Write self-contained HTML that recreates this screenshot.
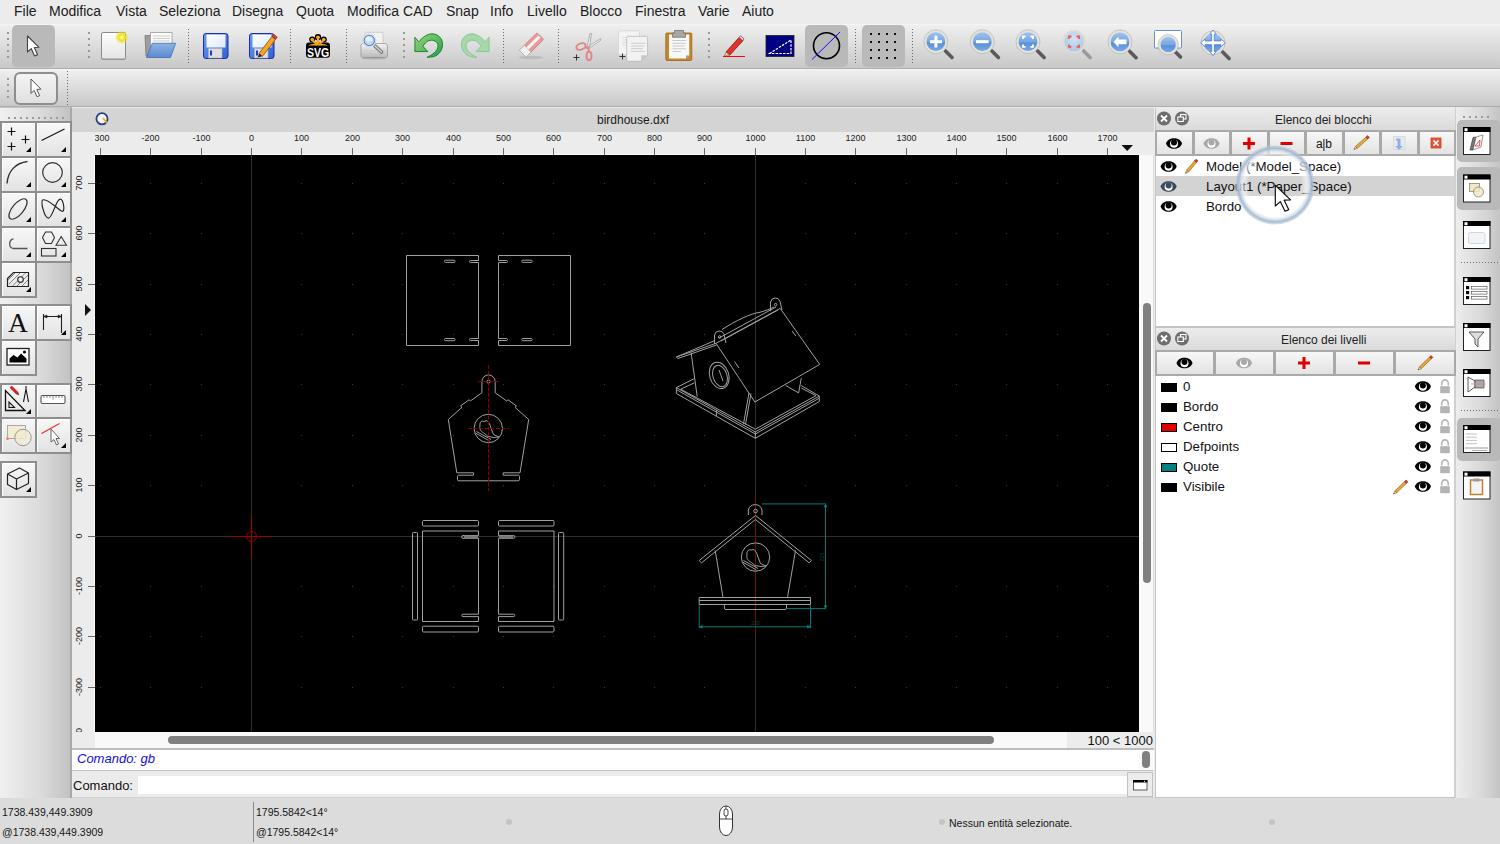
<!DOCTYPE html>
<html><head><meta charset="utf-8"><style>*{margin:0;padding:0;box-sizing:border-box}
html,body{width:1500px;height:844px;overflow:hidden;background:#ececec;font-family:"Liberation Sans",sans-serif;color:#1e1e1e}
.a{position:absolute}
svg{display:block}
#menubar{left:0;top:0;width:1500px;height:25px;background:#ececec;border-bottom:1px solid #f4f4f4}
#menubar span{position:absolute;top:3px;font-size:14px;line-height:16px;color:#202020}
.tb{left:0;width:1500px;background:linear-gradient(#efefef,#dedede 45%,#c8c8c8);border-bottom:1px solid #adadad}
#tb1{top:25px;height:44px}
#tb2{top:69px;height:38px;border-top:1px solid #f6f6f6}
.handle{position:absolute;width:2px;background:repeating-linear-gradient(#9a9a9a 0 2px,transparent 2px 6px)}
.hhandle{position:absolute;height:2px;background:repeating-linear-gradient(90deg,#9a9a9a 0 2px,transparent 2px 6px)}
.vsep{position:absolute;width:1px;background:repeating-linear-gradient(#6a6a6a 0 1px,transparent 1px 3px)}
.hsep{position:absolute;height:1px;background:repeating-linear-gradient(90deg,#6a6a6a 0 1px,transparent 1px 3px)}
#lefttb{left:0;top:107px;width:72px;height:691px;background:linear-gradient(90deg,#f0f0f0,#dadada 60%,#c2c2c2);border-right:2px solid #a9a9a9;border-top:1px solid #c4c4c4}
.tbtn{position:absolute;width:35px;height:35px;border:2px solid #9a9a9a;background:linear-gradient(#f7f7f7,#e4e4e4)}
.selbtn{position:absolute;background:#b9b9b9;border-radius:5px}
#mdititle{left:72px;top:108px;width:1082px;height:24px;background:#d4d4d4}
#mdititle span{position:absolute;left:525px;top:5px;font-size:12px;line-height:14px;color:#1a1a1a}
#rulerT{left:72px;top:132px;width:1082px;height:23px;background:#ececec}
#rulerL{left:72px;top:155px;width:23px;height:593px;background:#ececec}
#canvas{left:95px;top:155px;width:1044px;height:577px;background:#000;overflow:hidden}
#vscroll{left:1139px;top:155px;width:15px;height:593px;background:#f9f9f9;border-right:1px solid #dcdcdc}
#hscroll{left:95px;top:732px;width:972px;height:16px;background:#f9f9f9}
#hlabel{left:1067px;top:732px;width:87px;height:16px;background:#ececec}
#hlabel span{position:absolute;right:1px;top:1px;font-size:13px;line-height:16px;color:#111}
.thumb{position:absolute;background:#808080;border-radius:4px}
#cmdhist{left:72px;top:748px;width:1082px;height:23px;background:#fff;border-top:2px solid #bdbdbd;border-bottom:1px solid #c4c4c4}
#cmdhist span{position:absolute;left:5px;top:1px;font-size:13px;line-height:15px;font-style:italic;color:#1010e0}
#cmdline{left:72px;top:771px;width:1082px;height:27px;background:#ebebeb;border-bottom:1px solid #d0d0d0}
#cmdline span{position:absolute;left:1px;top:7px;font-size:13px;line-height:15px;color:#111}
#cmdinput{left:138px;top:776px;width:989px;height:18px;background:#fff}
#cmdbtn{left:1127px;top:772px;width:26px;height:25px;background:#ececec;border:1px solid #c2c2c2}
#status{left:0;top:798px;width:1500px;height:46px;background:#dcdcdc;font-size:10.5px;color:#161616}
#status span{position:absolute;line-height:12px}
.dock{left:1155px;width:300px;background:#fff;border-left:1px solid #c4c4c4;border-right:1px solid #cfcfcf}
#dock1{top:108px;height:220px}
#dock2{top:328px;height:470px;border-bottom:1px solid #c4c4c4}
.dtitle{position:absolute;left:0;top:0;width:299px;height:22px;background:linear-gradient(#ececec,#dadada);font-size:12px;color:#222}
.dtitle span{position:absolute;top:5px;line-height:14px}
.dbtn{position:absolute;height:26px;background:linear-gradient(#f4f4f4,#e6e6e6);border:2px solid #adadad;border-right-width:2px}
.rows span{position:absolute;font-size:13.3px;line-height:16px;color:#111}
#righttb{left:1455px;top:107px;width:45px;height:691px;background:linear-gradient(90deg,#ededed,#d8d8d8 60%,#c4c4c4);border-left:1px solid #d0d0d0}
</style></head><body>
<div id="menubar" class="a">
<span style="left:14px">File</span><span style="left:49px">Modifica</span><span style="left:116px">Vista</span><span style="left:159px">Seleziona</span><span style="left:232px">Disegna</span><span style="left:296px">Quota</span><span style="left:347px">Modifica CAD</span><span style="left:446px">Snap</span><span style="left:490px">Info</span><span style="left:527px">Livello</span><span style="left:580px">Blocco</span><span style="left:635px">Finestra</span><span style="left:698px">Varie</span><span style="left:742px">Aiuto</span>
</div>
<div id="tb1" class="a tb">
 <div class="handle" style="left:7px;top:7px;height:27px"></div>
 <div class="selbtn" style="left:12px;top:0px;width:43px;height:42px"></div>
 <div class="handle" style="left:88px;top:7px;height:27px"></div>
 <div class="vsep" style="left:188px;top:4px;height:35px"></div>
 <div class="vsep" style="left:290px;top:4px;height:35px"></div>
 <div class="vsep" style="left:346px;top:4px;height:35px"></div>
 <div class="handle" style="left:403px;top:7px;height:27px"></div>
 <div class="vsep" style="left:503px;top:4px;height:35px"></div>
 <div class="vsep" style="left:558px;top:4px;height:35px"></div>
 <div class="handle" style="left:708px;top:7px;height:27px"></div>
 <div class="selbtn" style="left:805px;top:0px;width:43px;height:42px"></div>
 <div class="vsep" style="left:855px;top:4px;height:35px"></div>
 <div class="selbtn" style="left:862px;top:0px;width:43px;height:42px"></div>
 <div class="vsep" style="left:912px;top:4px;height:35px"></div>
</div>
<div id="tb2" class="a tb">
 <div class="handle" style="left:7px;top:8px;height:21px"></div>
 <div class="a" style="left:14px;top:2px;width:44px;height:33px;border:2px solid #8e8e8e;border-radius:6px;background:linear-gradient(#f4f4f4,#e0e0e0)"></div>
 <div class="vsep" style="left:67px;top:1px;height:34px"></div>
</div>
<div id="lefttb" class="a">
 <div class="hhandle" style="left:8px;top:9px;width:56px"></div>
</div>
<div id="mdititle" class="a"><span>birdhouse.dxf</span></div>
<div id="rulerT" class="a"></div>
<div id="rulerL" class="a"></div>
<div class="a" style="left:94px;top:154px;width:1045px;height:1px;background:#fafafa"></div>
<div class="a" style="left:94px;top:154px;width:1px;height:578px;background:#fafafa"></div>
<div id="vscroll" class="a"><div class="thumb" style="left:4px;top:148px;width:8px;height:280px"></div></div>
<div id="hscroll" class="a"><div class="thumb" style="left:73px;top:4px;width:826px;height:8px"></div></div>
<div id="hlabel" class="a"><span>100 &lt; 1000</span></div>
<div id="cmdhist" class="a"><span>Comando: gb</span><div class="a" style="left:1067px;top:0;width:14px;height:20px;background:#f9f9f9"></div><div class="thumb" style="left:1070px;top:1px;width:8px;height:17px"></div></div>
<div id="cmdline" class="a"><span>Comando:</span></div>
<div id="cmdinput" class="a"></div>
<div id="cmdbtn" class="a"></div>
<div id="dock1" class="a dock">
 <div class="dtitle"><span style="left:119px">Elenco dei blocchi</span></div>
 <div class="a" style="left:0;top:22px;width:299px;height:26px;background:#bdbdbd"></div>
 <div class="a" style="left:0;top:68px;width:299px;height:20px;background:#d3d3d3"></div>
 <div class="rows">
  <span style="left:50px;top:51px">Model (*Model_Space)</span>
  <span style="left:50px;top:71px">Layout1 (*Paper_Space)</span>
  <span style="left:50px;top:91px">Bordo</span>
 </div>
 <div class="a" style="left:0;top:218px;width:299px;height:2px;background:#c4c4c4"></div>
</div>
<div id="dock2" class="a dock">
 <div class="dtitle"><span style="left:125px">Elenco dei livelli</span></div>
 <div class="rows">
  <span style="left:27px;top:51px">0</span>
  <span style="left:27px;top:71px">Bordo</span>
  <span style="left:27px;top:91px">Centro</span>
  <span style="left:27px;top:111px">Defpoints</span>
  <span style="left:27px;top:131px">Quote</span>
  <span style="left:27px;top:151px">Visibile</span>
 </div>
 <div class="a" style="left:5px;top:55px;width:16px;height:9px;background:#000"></div>
 <div class="a" style="left:5px;top:75px;width:16px;height:9px;background:#000"></div>
 <div class="a" style="left:5px;top:95px;width:16px;height:9px;background:#e00000;border:1px solid #000"></div>
 <div class="a" style="left:5px;top:115px;width:16px;height:9px;background:#fff;border:1px solid #000"></div>
 <div class="a" style="left:5px;top:135px;width:16px;height:9px;background:#008080;border:1px solid #000"></div>
 <div class="a" style="left:5px;top:155px;width:16px;height:9px;background:#000"></div>
</div>
<div id="righttb" class="a">
 <div class="hhandle" style="left:7px;top:9px;width:28px"></div>
 <div class="selbtn" style="left:1px;top:13px;width:44px;height:42px"></div>
 <div class="selbtn" style="left:1px;top:60px;width:44px;height:43px"></div>
 <div class="hsep" style="left:5px;top:155px;width:40px"></div>
 <div class="hsep" style="left:5px;top:303px;width:40px"></div>
 <div class="selbtn" style="left:1px;top:311px;width:44px;height:43px"></div>
</div>
<div id="status" class="a">
 <span style="left:2px;top:8px">1738.439,449.3909</span>
 <span style="left:2px;top:28px">@1738.439,449.3909</span>
 <div class="a" style="left:253px;top:4px;width:1px;height:40px;background:#8a8a8a"></div>
 <span style="left:256px;top:8px">1795.5842&lt;14°</span>
 <span style="left:256px;top:28px">@1795.5842&lt;14°</span>
 <div class="a" style="left:506px;top:21px;width:6px;height:6px;border-radius:3px;background:#c4c4c4"></div>
 <div class="a" style="left:939px;top:21px;width:6px;height:6px;border-radius:3px;background:#c4c4c4"></div>
 <div class="a" style="left:1269px;top:21px;width:6px;height:6px;border-radius:3px;background:#c4c4c4"></div>
 <span style="left:949px;top:19px">Nessun entità selezionate.</span>
</div>

<div id="canvas" class="a"><svg class="a" style="left:0;top:0" width="1044" height="576" viewBox="95 155 1044 576"><g fill="#3c3c3c"><rect x="100" y="737" width="1" height="1"/><rect x="100" y="687" width="1" height="1"/><rect x="100" y="636" width="1" height="1"/><rect x="100" y="586" width="1" height="1"/><rect x="100" y="536" width="1" height="1"/><rect x="100" y="485" width="1" height="1"/><rect x="100" y="435" width="1" height="1"/><rect x="100" y="384" width="1" height="1"/><rect x="100" y="334" width="1" height="1"/><rect x="100" y="284" width="1" height="1"/><rect x="100" y="233" width="1" height="1"/><rect x="100" y="183" width="1" height="1"/><rect x="150" y="737" width="1" height="1"/><rect x="150" y="687" width="1" height="1"/><rect x="150" y="636" width="1" height="1"/><rect x="150" y="586" width="1" height="1"/><rect x="150" y="536" width="1" height="1"/><rect x="150" y="485" width="1" height="1"/><rect x="150" y="435" width="1" height="1"/><rect x="150" y="384" width="1" height="1"/><rect x="150" y="334" width="1" height="1"/><rect x="150" y="284" width="1" height="1"/><rect x="150" y="233" width="1" height="1"/><rect x="150" y="183" width="1" height="1"/><rect x="201" y="737" width="1" height="1"/><rect x="201" y="687" width="1" height="1"/><rect x="201" y="636" width="1" height="1"/><rect x="201" y="586" width="1" height="1"/><rect x="201" y="536" width="1" height="1"/><rect x="201" y="485" width="1" height="1"/><rect x="201" y="435" width="1" height="1"/><rect x="201" y="384" width="1" height="1"/><rect x="201" y="334" width="1" height="1"/><rect x="201" y="284" width="1" height="1"/><rect x="201" y="233" width="1" height="1"/><rect x="201" y="183" width="1" height="1"/><rect x="251" y="737" width="1" height="1"/><rect x="251" y="687" width="1" height="1"/><rect x="251" y="636" width="1" height="1"/><rect x="251" y="586" width="1" height="1"/><rect x="251" y="536" width="1" height="1"/><rect x="251" y="485" width="1" height="1"/><rect x="251" y="435" width="1" height="1"/><rect x="251" y="384" width="1" height="1"/><rect x="251" y="334" width="1" height="1"/><rect x="251" y="284" width="1" height="1"/><rect x="251" y="233" width="1" height="1"/><rect x="251" y="183" width="1" height="1"/><rect x="301" y="737" width="1" height="1"/><rect x="301" y="687" width="1" height="1"/><rect x="301" y="636" width="1" height="1"/><rect x="301" y="586" width="1" height="1"/><rect x="301" y="536" width="1" height="1"/><rect x="301" y="485" width="1" height="1"/><rect x="301" y="435" width="1" height="1"/><rect x="301" y="384" width="1" height="1"/><rect x="301" y="334" width="1" height="1"/><rect x="301" y="284" width="1" height="1"/><rect x="301" y="233" width="1" height="1"/><rect x="301" y="183" width="1" height="1"/><rect x="352" y="737" width="1" height="1"/><rect x="352" y="687" width="1" height="1"/><rect x="352" y="636" width="1" height="1"/><rect x="352" y="586" width="1" height="1"/><rect x="352" y="536" width="1" height="1"/><rect x="352" y="485" width="1" height="1"/><rect x="352" y="435" width="1" height="1"/><rect x="352" y="384" width="1" height="1"/><rect x="352" y="334" width="1" height="1"/><rect x="352" y="284" width="1" height="1"/><rect x="352" y="233" width="1" height="1"/><rect x="352" y="183" width="1" height="1"/><rect x="402" y="737" width="1" height="1"/><rect x="402" y="687" width="1" height="1"/><rect x="402" y="636" width="1" height="1"/><rect x="402" y="586" width="1" height="1"/><rect x="402" y="536" width="1" height="1"/><rect x="402" y="485" width="1" height="1"/><rect x="402" y="435" width="1" height="1"/><rect x="402" y="384" width="1" height="1"/><rect x="402" y="334" width="1" height="1"/><rect x="402" y="284" width="1" height="1"/><rect x="402" y="233" width="1" height="1"/><rect x="402" y="183" width="1" height="1"/><rect x="453" y="737" width="1" height="1"/><rect x="453" y="687" width="1" height="1"/><rect x="453" y="636" width="1" height="1"/><rect x="453" y="586" width="1" height="1"/><rect x="453" y="536" width="1" height="1"/><rect x="453" y="485" width="1" height="1"/><rect x="453" y="435" width="1" height="1"/><rect x="453" y="384" width="1" height="1"/><rect x="453" y="334" width="1" height="1"/><rect x="453" y="284" width="1" height="1"/><rect x="453" y="233" width="1" height="1"/><rect x="453" y="183" width="1" height="1"/><rect x="503" y="737" width="1" height="1"/><rect x="503" y="687" width="1" height="1"/><rect x="503" y="636" width="1" height="1"/><rect x="503" y="586" width="1" height="1"/><rect x="503" y="536" width="1" height="1"/><rect x="503" y="485" width="1" height="1"/><rect x="503" y="435" width="1" height="1"/><rect x="503" y="384" width="1" height="1"/><rect x="503" y="334" width="1" height="1"/><rect x="503" y="284" width="1" height="1"/><rect x="503" y="233" width="1" height="1"/><rect x="503" y="183" width="1" height="1"/><rect x="553" y="737" width="1" height="1"/><rect x="553" y="687" width="1" height="1"/><rect x="553" y="636" width="1" height="1"/><rect x="553" y="586" width="1" height="1"/><rect x="553" y="536" width="1" height="1"/><rect x="553" y="485" width="1" height="1"/><rect x="553" y="435" width="1" height="1"/><rect x="553" y="384" width="1" height="1"/><rect x="553" y="334" width="1" height="1"/><rect x="553" y="284" width="1" height="1"/><rect x="553" y="233" width="1" height="1"/><rect x="553" y="183" width="1" height="1"/><rect x="604" y="737" width="1" height="1"/><rect x="604" y="687" width="1" height="1"/><rect x="604" y="636" width="1" height="1"/><rect x="604" y="586" width="1" height="1"/><rect x="604" y="536" width="1" height="1"/><rect x="604" y="485" width="1" height="1"/><rect x="604" y="435" width="1" height="1"/><rect x="604" y="384" width="1" height="1"/><rect x="604" y="334" width="1" height="1"/><rect x="604" y="284" width="1" height="1"/><rect x="604" y="233" width="1" height="1"/><rect x="604" y="183" width="1" height="1"/><rect x="654" y="737" width="1" height="1"/><rect x="654" y="687" width="1" height="1"/><rect x="654" y="636" width="1" height="1"/><rect x="654" y="586" width="1" height="1"/><rect x="654" y="536" width="1" height="1"/><rect x="654" y="485" width="1" height="1"/><rect x="654" y="435" width="1" height="1"/><rect x="654" y="384" width="1" height="1"/><rect x="654" y="334" width="1" height="1"/><rect x="654" y="284" width="1" height="1"/><rect x="654" y="233" width="1" height="1"/><rect x="654" y="183" width="1" height="1"/><rect x="704" y="737" width="1" height="1"/><rect x="704" y="687" width="1" height="1"/><rect x="704" y="636" width="1" height="1"/><rect x="704" y="586" width="1" height="1"/><rect x="704" y="536" width="1" height="1"/><rect x="704" y="485" width="1" height="1"/><rect x="704" y="435" width="1" height="1"/><rect x="704" y="384" width="1" height="1"/><rect x="704" y="334" width="1" height="1"/><rect x="704" y="284" width="1" height="1"/><rect x="704" y="233" width="1" height="1"/><rect x="704" y="183" width="1" height="1"/><rect x="755" y="737" width="1" height="1"/><rect x="755" y="687" width="1" height="1"/><rect x="755" y="636" width="1" height="1"/><rect x="755" y="586" width="1" height="1"/><rect x="755" y="536" width="1" height="1"/><rect x="755" y="485" width="1" height="1"/><rect x="755" y="435" width="1" height="1"/><rect x="755" y="384" width="1" height="1"/><rect x="755" y="334" width="1" height="1"/><rect x="755" y="284" width="1" height="1"/><rect x="755" y="233" width="1" height="1"/><rect x="755" y="183" width="1" height="1"/><rect x="805" y="737" width="1" height="1"/><rect x="805" y="687" width="1" height="1"/><rect x="805" y="636" width="1" height="1"/><rect x="805" y="586" width="1" height="1"/><rect x="805" y="536" width="1" height="1"/><rect x="805" y="485" width="1" height="1"/><rect x="805" y="435" width="1" height="1"/><rect x="805" y="384" width="1" height="1"/><rect x="805" y="334" width="1" height="1"/><rect x="805" y="284" width="1" height="1"/><rect x="805" y="233" width="1" height="1"/><rect x="805" y="183" width="1" height="1"/><rect x="855" y="737" width="1" height="1"/><rect x="855" y="687" width="1" height="1"/><rect x="855" y="636" width="1" height="1"/><rect x="855" y="586" width="1" height="1"/><rect x="855" y="536" width="1" height="1"/><rect x="855" y="485" width="1" height="1"/><rect x="855" y="435" width="1" height="1"/><rect x="855" y="384" width="1" height="1"/><rect x="855" y="334" width="1" height="1"/><rect x="855" y="284" width="1" height="1"/><rect x="855" y="233" width="1" height="1"/><rect x="855" y="183" width="1" height="1"/><rect x="906" y="737" width="1" height="1"/><rect x="906" y="687" width="1" height="1"/><rect x="906" y="636" width="1" height="1"/><rect x="906" y="586" width="1" height="1"/><rect x="906" y="536" width="1" height="1"/><rect x="906" y="485" width="1" height="1"/><rect x="906" y="435" width="1" height="1"/><rect x="906" y="384" width="1" height="1"/><rect x="906" y="334" width="1" height="1"/><rect x="906" y="284" width="1" height="1"/><rect x="906" y="233" width="1" height="1"/><rect x="906" y="183" width="1" height="1"/><rect x="956" y="737" width="1" height="1"/><rect x="956" y="687" width="1" height="1"/><rect x="956" y="636" width="1" height="1"/><rect x="956" y="586" width="1" height="1"/><rect x="956" y="536" width="1" height="1"/><rect x="956" y="485" width="1" height="1"/><rect x="956" y="435" width="1" height="1"/><rect x="956" y="384" width="1" height="1"/><rect x="956" y="334" width="1" height="1"/><rect x="956" y="284" width="1" height="1"/><rect x="956" y="233" width="1" height="1"/><rect x="956" y="183" width="1" height="1"/><rect x="1006" y="737" width="1" height="1"/><rect x="1006" y="687" width="1" height="1"/><rect x="1006" y="636" width="1" height="1"/><rect x="1006" y="586" width="1" height="1"/><rect x="1006" y="536" width="1" height="1"/><rect x="1006" y="485" width="1" height="1"/><rect x="1006" y="435" width="1" height="1"/><rect x="1006" y="384" width="1" height="1"/><rect x="1006" y="334" width="1" height="1"/><rect x="1006" y="284" width="1" height="1"/><rect x="1006" y="233" width="1" height="1"/><rect x="1006" y="183" width="1" height="1"/><rect x="1057" y="737" width="1" height="1"/><rect x="1057" y="687" width="1" height="1"/><rect x="1057" y="636" width="1" height="1"/><rect x="1057" y="586" width="1" height="1"/><rect x="1057" y="536" width="1" height="1"/><rect x="1057" y="485" width="1" height="1"/><rect x="1057" y="435" width="1" height="1"/><rect x="1057" y="384" width="1" height="1"/><rect x="1057" y="334" width="1" height="1"/><rect x="1057" y="284" width="1" height="1"/><rect x="1057" y="233" width="1" height="1"/><rect x="1057" y="183" width="1" height="1"/><rect x="1107" y="737" width="1" height="1"/><rect x="1107" y="687" width="1" height="1"/><rect x="1107" y="636" width="1" height="1"/><rect x="1107" y="586" width="1" height="1"/><rect x="1107" y="536" width="1" height="1"/><rect x="1107" y="485" width="1" height="1"/><rect x="1107" y="435" width="1" height="1"/><rect x="1107" y="384" width="1" height="1"/><rect x="1107" y="334" width="1" height="1"/><rect x="1107" y="284" width="1" height="1"/><rect x="1107" y="233" width="1" height="1"/><rect x="1107" y="183" width="1" height="1"/></g><g stroke="#2e2e2e" stroke-width="1" fill="none">
 <path d="M95 536.5H1139M251.5 155V731M755.5 155V731"/>
</g>
<g stroke="#a00000" stroke-width="1" fill="none">
 <path d="M231 536.5H272M251.5 516V557"/>
 <circle cx="251.5" cy="536.5" r="5"/>
</g>
<g stroke="#a0a0a0" stroke-width="1" fill="none" stroke-linejoin="round">
 <!-- side panels top -->
 <path d="M406.5 255.5H478.5V260.5H470.5A1 1 0 0 0 470.5 262.5H478.5V338.5H470.5A1 1 0 0 0 470.5 340.5H478.5V345.5H406.5Z"/>
 <rect x="444.5" y="260.2" width="10.5" height="2.2" rx="1"/>
 <rect x="444.5" y="338.5" width="10.5" height="2.2" rx="1"/>
 <path d="M570.5 255.5H498.5V260.5H506.5A1 1 0 0 1 506.5 262.5H498.5V338.5H506.5A1 1 0 0 1 506.5 340.5H498.5V345.5H570.5Z"/>
 <rect x="521.7" y="260.2" width="10.5" height="2.2" rx="1"/>
 <rect x="521.7" y="338.5" width="10.5" height="2.2" rx="1"/>
 <!-- front panel with bird -->
 <path d="M481.9 392.8V381.6A6.65 6.65 0 0 1 495.2 381.6V392.8L506.5 400.9L508 399.8L516.5 406L515 407.3L528.7 419.5L520 472.8H503.2V475.2H518.5A1.5 1.5 0 0 1 519.5 476.7V479.3A1.5 1.5 0 0 1 518 480.8H459A1.5 1.5 0 0 1 457.5 479.3V476.7A1.5 1.5 0 0 1 458.5 475.2H473.6V472.8H456.8L448.3 419.5L462 407.3L460.5 406L469 399.8L470.5 400.9Z"/>
 <circle cx="488.5" cy="381.6" r="1.6"/>
 <circle cx="488.3" cy="428.5" r="14.2"/>
 <path d="M484 421.5C481 420 479.5 423 480 426C479 429.5 481.5 432 484.5 433.5L488 436.5L494 437.5L499 437L493.5 434.5L491 428C490 424 488.5 422 487 420.5Z M476.5 431.5L491 439.5M475.5 433L489.5 441"/>
 <!-- bottom panels -->
 <rect x="422.5" y="520.5" width="56" height="5.5" rx="1"/>
 <rect x="498.5" y="520.5" width="55.5" height="5.5" rx="1"/>
 <rect x="422.5" y="626.2" width="56" height="5.8" rx="1"/>
 <rect x="498.5" y="626.2" width="55.5" height="5.8" rx="1"/>
 <rect x="412.5" y="532.5" width="5" height="87.5" rx="0.8"/>
 <rect x="558.5" y="532.5" width="5.2" height="87.5" rx="0.8"/>
 <path d="M422.5 531H478.5V535.5H463A1 1 0 0 0 463 538.3H478.5V614.2H463A1 1 0 0 0 463 616.6H478.5V621.5H422.5Z"/>
 <path d="M554 531H498.5V535.5H513.6A1 1 0 0 1 513.6 538.3H498.5V614.2H513.6A1 1 0 0 1 513.6 616.6H498.5V621.5H554Z"/>
</g>
<g fill="#777"><rect x="464" y="535.5" width="14" height="3"/><rect x="499" y="535.5" width="14" height="3"/></g>
<!-- red center lines -->
<g stroke="#900000" stroke-width="1" fill="none" stroke-dasharray="4 1.6">
 <path d="M488.5 365V491M468 428.5H509M477.9 381.6H498.9"/>
 <path d="M755.5 495V636"/>
</g>
<!-- front view with dims -->
<g stroke="#a0a0a0" stroke-width="1" fill="none" stroke-linejoin="round">
 <path d="M748.4 515V510A7 7 0 0 1 762 510V515"/>
 <circle cx="755.5" cy="511" r="1.8"/>
 <path d="M699.2 560.5L755.5 515.5L811.4 560.5M701.5 562.8L755.5 519.5L809.1 562.8M699.2 560.5L701.5 562.8M811.4 560.5L809.1 562.8"/>
 <path d="M715.2 550.4L723 597.5M795.5 550.4L787.5 597.5"/>
 <rect x="699.2" y="597.5" width="111.3" height="7" />
 <path d="M699.2 600.5H810.5"/>
 <path d="M724.4 604.5V608A1.5 1.5 0 0 0 726 609.5H785A1.5 1.5 0 0 0 786.5 608V604.5"/>
 <circle cx="755.5" cy="557.1" r="14.2"/>
 <path d="M751 550C748 549 746.5 552 747 555C746 558.5 748.5 561 751.5 562.5L755 565.5L761 566.5L766 566L760.5 563.5L758 557C757 553 755.5 551 754 549.5Z M743.5 560.5L758 568.5M742.5 562L756.5 570"/>
</g>
<g stroke="#007a7a" stroke-width="1" fill="none">
 <path d="M762 503.9H826M786.5 608.6H826M825.5 503.9V608.6M699.2 605V628M810.5 605V628M699.2 626.8H810.5"/>
 <path d="M824.3 507L825.5 504L826.7 507ZM824.3 605.6L825.5 608.6L826.7 605.6ZM702.2 625.6L699.2 626.8L702.2 628ZM807.5 625.6L810.5 626.8L807.5 628Z" fill="#007a7a"/>
</g>
<g fill="#004848" font-family="Liberation Sans" font-size="5">
 <text x="755.5" y="625" text-anchor="middle">220</text>
 <text transform="translate(824,557) rotate(-90)" text-anchor="middle">225</text>
</g>
<!-- isometric house -->
<g stroke="#a0a0a0" stroke-width="1" fill="none" stroke-linejoin="round">
 <!-- base tray -->
 <path d="M676.4 387.6L755.3 431.9L819.3 396.1M676.4 393.5L755.3 438.3L819.3 401.5M676.4 389.6L755.3 434L819.3 398.2M676.4 387.6V393.5M819.3 396.1V401.5M755.3 431.9V438.3M716.4 410V416"/>
 <path d="M680.7 389.2L755.3 429.2L816 395.6M676.4 387.6L694.5 378.5M680.7 389.2L694.5 382.8M819.3 396.1L801.2 385.5M816 395.6L801.2 388"/>
 <!-- left roof -->
 <path d="M676.4 357L716 343.3M676.4 357L715 340.5M676.4 357L678 358.5L716.5 345"/>
 <path d="M722 329.5C735 321 752 313 759 312.5C765 311 770 309 774 307"/>
 <!-- right roof -->
 <path d="M716 343.3L780.2 308.4L819.7 364.4L754.9 402Z"/>
 <path d="M719 338L776 307M721 341L778 310"/>
 <!-- front tab -->
 <path d="M714.5 344V335A5 5.5 0 0 1 724 334.5L726 343"/>
 <circle cx="719.6" cy="337" r="1.3"/>
 <!-- back tab -->
 <path d="M770.5 311V302A5 5.5 0 0 1 780 301.5L782 310"/>
 <circle cx="775.6" cy="304.7" r="1.3"/>
 <!-- front wall -->
 <path d="M691.1 352.5L697.2 396.5M749 392.9L743.5 424.1M751 393.5L745.5 424.5"/>
 <ellipse cx="719.2" cy="375.4" rx="9.5" ry="13.5" transform="rotate(-18 719.2 375.4)"/>
 <ellipse cx="720" cy="376" rx="7" ry="11" transform="rotate(-18 720 376)"/>
 <path d="M719 370L723 381"/>
 <!-- back wall -->
 <path d="M801.3 378.2L798.6 392.9L785.7 385.5"/>
 <!-- slots -->
 <path d="M734.5 361.5L739 368M792 331L796 336"/>
</g>
</svg></div>
<svg class="a" style="left:0;top:0" width="1500" height="844" viewBox="0 0 1500 844"><g font-family="Liberation Sans" font-size="9" fill="#1c1c1c"><g clip-path="url(#clipT)"><rect x="100" y="148" width="1" height="7" fill="#6a6a6a"/><text x="100.5" y="141" text-anchor="middle">-300</text><rect x="150" y="148" width="1" height="7" fill="#6a6a6a"/><text x="150.5" y="141" text-anchor="middle">-200</text><rect x="201" y="148" width="1" height="7" fill="#6a6a6a"/><text x="201.5" y="141" text-anchor="middle">-100</text><rect x="251" y="148" width="1" height="7" fill="#6a6a6a"/><text x="251.5" y="141" text-anchor="middle">0</text><rect x="301" y="148" width="1" height="7" fill="#6a6a6a"/><text x="301.5" y="141" text-anchor="middle">100</text><rect x="352" y="148" width="1" height="7" fill="#6a6a6a"/><text x="352.5" y="141" text-anchor="middle">200</text><rect x="402" y="148" width="1" height="7" fill="#6a6a6a"/><text x="402.5" y="141" text-anchor="middle">300</text><rect x="453" y="148" width="1" height="7" fill="#6a6a6a"/><text x="453.5" y="141" text-anchor="middle">400</text><rect x="503" y="148" width="1" height="7" fill="#6a6a6a"/><text x="503.5" y="141" text-anchor="middle">500</text><rect x="553" y="148" width="1" height="7" fill="#6a6a6a"/><text x="553.5" y="141" text-anchor="middle">600</text><rect x="604" y="148" width="1" height="7" fill="#6a6a6a"/><text x="604.5" y="141" text-anchor="middle">700</text><rect x="654" y="148" width="1" height="7" fill="#6a6a6a"/><text x="654.5" y="141" text-anchor="middle">800</text><rect x="704" y="148" width="1" height="7" fill="#6a6a6a"/><text x="704.5" y="141" text-anchor="middle">900</text><rect x="755" y="148" width="1" height="7" fill="#6a6a6a"/><text x="755.5" y="141" text-anchor="middle">1000</text><rect x="805" y="148" width="1" height="7" fill="#6a6a6a"/><text x="805.5" y="141" text-anchor="middle">1100</text><rect x="855" y="148" width="1" height="7" fill="#6a6a6a"/><text x="855.5" y="141" text-anchor="middle">1200</text><rect x="906" y="148" width="1" height="7" fill="#6a6a6a"/><text x="906.5" y="141" text-anchor="middle">1300</text><rect x="956" y="148" width="1" height="7" fill="#6a6a6a"/><text x="956.5" y="141" text-anchor="middle">1400</text><rect x="1006" y="148" width="1" height="7" fill="#6a6a6a"/><text x="1006.5" y="141" text-anchor="middle">1500</text><rect x="1057" y="148" width="1" height="7" fill="#6a6a6a"/><text x="1057.5" y="141" text-anchor="middle">1600</text><rect x="1107" y="148" width="1" height="7" fill="#6a6a6a"/><text x="1107.5" y="141" text-anchor="middle">1700</text></g><g clip-path="url(#clipL)"><rect x="88" y="737" width="7" height="1" fill="#6a6a6a"/><text transform="translate(81.5,737) rotate(-90)" text-anchor="middle">-400</text><rect x="88" y="687" width="7" height="1" fill="#6a6a6a"/><text transform="translate(81.5,687) rotate(-90)" text-anchor="middle">-300</text><rect x="88" y="636" width="7" height="1" fill="#6a6a6a"/><text transform="translate(81.5,636) rotate(-90)" text-anchor="middle">-200</text><rect x="88" y="586" width="7" height="1" fill="#6a6a6a"/><text transform="translate(81.5,586) rotate(-90)" text-anchor="middle">-100</text><rect x="88" y="536" width="7" height="1" fill="#6a6a6a"/><text transform="translate(81.5,536) rotate(-90)" text-anchor="middle">0</text><rect x="88" y="485" width="7" height="1" fill="#6a6a6a"/><text transform="translate(81.5,485) rotate(-90)" text-anchor="middle">100</text><rect x="88" y="435" width="7" height="1" fill="#6a6a6a"/><text transform="translate(81.5,435) rotate(-90)" text-anchor="middle">200</text><rect x="88" y="384" width="7" height="1" fill="#6a6a6a"/><text transform="translate(81.5,384) rotate(-90)" text-anchor="middle">300</text><rect x="88" y="334" width="7" height="1" fill="#6a6a6a"/><text transform="translate(81.5,334) rotate(-90)" text-anchor="middle">400</text><rect x="88" y="284" width="7" height="1" fill="#6a6a6a"/><text transform="translate(81.5,284) rotate(-90)" text-anchor="middle">500</text><rect x="88" y="233" width="7" height="1" fill="#6a6a6a"/><text transform="translate(81.5,233) rotate(-90)" text-anchor="middle">600</text><rect x="88" y="183" width="7" height="1" fill="#6a6a6a"/><text transform="translate(81.5,183) rotate(-90)" text-anchor="middle">700</text></g></g><defs><clipPath id="clipT"><rect x="95" y="131" width="1059" height="24"/></clipPath><clipPath id="clipL"><rect x="72" y="155" width="23" height="577"/></clipPath></defs><path d="M1121.5 145 L1133 145 L1127.2 151 Z" fill="#111"/><path d="M85 304 L85 316 L91 310 Z" fill="#111"/></svg>
<svg class="a" style="left:0;top:0" width="1500" height="844" viewBox="0 0 1500 844"><defs>
 <linearGradient id="gPage" x1="0" y1="0" x2="0" y2="1"><stop offset="0" stop-color="#fdfdfd"/><stop offset="1" stop-color="#e4e4e4"/></linearGradient>
 <radialGradient id="gGlow"><stop offset="0" stop-color="#ffffa0"/><stop offset="0.45" stop-color="#f0e020"/><stop offset="1" stop-color="#f0e020" stop-opacity="0"/></radialGradient>
 <linearGradient id="gBlueF" x1="0" y1="0" x2="0" y2="1"><stop offset="0" stop-color="#8fb4e6"/><stop offset="1" stop-color="#5a8ad0"/></linearGradient>
 <linearGradient id="gFlop" x1="0" y1="0" x2="1" y2="1"><stop offset="0" stop-color="#6a9cf4"/><stop offset="1" stop-color="#2f62d8"/></linearGradient>
 <linearGradient id="gLabel" x1="0" y1="0" x2="1" y2="1"><stop offset="0" stop-color="#ffffff"/><stop offset="1" stop-color="#dfe8f8"/></linearGradient>
 <linearGradient id="gLens" x1="0" y1="0" x2="0" y2="1"><stop offset="0" stop-color="#a6c6ee"/><stop offset="0.5" stop-color="#76a6e2"/><stop offset="0.56" stop-color="#5a8fd8"/><stop offset="1" stop-color="#7cacea"/></linearGradient>
 <radialGradient id="gLensP" cx="0.5" cy="0.35" r="0.65"><stop offset="0" stop-color="#d4e2f2"/><stop offset="1" stop-color="#a9c4e4"/></radialGradient>
 <linearGradient id="gGreen" x1="0" y1="0" x2="1" y2="1"><stop offset="0" stop-color="#9ad67a"/><stop offset="1" stop-color="#22a044"/></linearGradient>
 <linearGradient id="gPrinter" x1="0" y1="0" x2="0" y2="1"><stop offset="0" stop-color="#f4f4f4"/><stop offset="1" stop-color="#b8b8b8"/></linearGradient>
 <linearGradient id="gBtn" x1="0" y1="0" x2="0" y2="1"><stop offset="0" stop-color="#f8f8f8"/><stop offset="1" stop-color="#e2e2e2"/></linearGradient>
</defs>
<!-- tb1 pointer -->
<path d="M27.5 36L27.5 52L31.2 48.6L34.6 56L37.6 54.7L34.3 47.5L39 47.3Z" fill="#fff" stroke="#444" stroke-width="1.1" stroke-linejoin="round"/>
<!-- tb2 pointer -->
<path d="M31 79L31 93.5L34.1 90.4L37 96.7L39.6 95.6L36.8 89.4L40.9 89.2Z" fill="#fff" stroke="#555" stroke-width="1" stroke-linejoin="round"/>
<!-- new doc -->
<rect x="101.5" y="32.5" width="24" height="27" rx="1.5" fill="url(#gPage)" stroke="#8a8a8a"/>
<rect x="102" y="58" width="23" height="2" fill="#a0a0a0" opacity="0.6"/>
<circle cx="121.7" cy="37.3" r="7" fill="url(#gGlow)"/>
<!-- open folder -->
<path d="M145 35.5H156L158 38H168V56H146Z" fill="#9c9c9c" stroke="#777" stroke-width="0.8"/>
<path d="M150.5 32.5H172V47L150.5 49Z" fill="#fafafa" stroke="#999" stroke-width="0.8"/>
<path d="M153 36H170M153 38.5H170M153 41H170" stroke="#c0c0c0" stroke-width="0.8"/>
<path d="M152.3 43.3H175.7L170.5 57.5H146.5Z" fill="url(#gBlueF)" stroke="#3f6fb0" stroke-width="0.8"/>
<!-- save -->
<g>
<rect x="203.5" y="33.5" width="24.5" height="25" rx="2.5" fill="url(#gFlop)" stroke="#1f2f9f"/>
<rect x="206.5" y="34.5" width="19" height="13" fill="url(#gLabel)"/>
<rect x="208.5" y="48.5" width="13.5" height="9.5" fill="#dedede" stroke="#b0b0b0" stroke-width="0.6"/>
<rect x="210" y="50.5" width="2" height="5" fill="#1a3cc8"/>
</g>
<g>
<rect x="249.5" y="33.5" width="24.5" height="25" rx="2.5" fill="url(#gFlop)" stroke="#1f2f9f"/>
<rect x="252.5" y="34.5" width="19" height="13" fill="url(#gLabel)"/>
<rect x="254.5" y="48.5" width="13.5" height="9.5" fill="#dedede" stroke="#b0b0b0" stroke-width="0.6"/>
<rect x="256" y="50.5" width="2" height="5" fill="#1a3cc8"/>
<path d="M259 53.5L272 36.5L275.5 39.5L262.5 56.3Z" fill="#f5a623" stroke="#8a4a10" stroke-width="0.8"/>
<path d="M272 36.5L273.8 34.3L277.3 37.2L275.5 39.5Z" fill="#e03a3a" stroke="#8a2a10" stroke-width="0.6"/>
<path d="M259 53.5L257.6 57.6L262.5 56.3Z" fill="#3a2a1a"/>
</g>
<!-- SVG logo -->
<rect x="306" y="42.5" width="24" height="15.3" rx="3" fill="#000"/>
<g fill="#000"><circle cx="318" cy="37.2" r="3.2"/><circle cx="312.2" cy="39.6" r="3"/><circle cx="323.8" cy="39.6" r="3"/></g>
<g fill="#f5a623">
 <circle cx="318" cy="37.3" r="1.9"/><circle cx="312.2" cy="39.6" r="1.8"/><circle cx="323.8" cy="39.6" r="1.8"/>
 <path d="M317 38H319L319.5 45H316.5ZM311.5 40.5L313 39L318 44.5L316.5 45.5ZM324.5 40.5L323 39L318 44.5L319.5 45.5Z"/>
 <path d="M308 45.6C311 44 315 43.8 318 43.8C321 43.8 325 44 328 45.6Z"/>
</g>
<text x="318" y="57" text-anchor="middle" font-family="Liberation Sans" font-weight="bold" font-size="13.5" fill="#fff" transform="translate(318 0) scale(0.78 1) translate(-318 0)">SVG</text>
<!-- print preview -->
<rect x="365" y="32.3" width="18" height="13" rx="1" fill="#f2f2f2" stroke="#c4c4c4" stroke-width="0.8"/>
<path d="M361 46C361 44.5 362 43.5 363.5 43.5H385C386.5 43.5 387.5 44.5 387.5 46V56C387.5 57 386.8 57.5 386 57.5H362.5C361.7 57.5 361 57 361 56Z" fill="url(#gPrinter)" stroke="#9a9a9a" stroke-width="0.8"/>
<path d="M362 50.5H386.5" stroke="#cfcfcf" stroke-width="1"/>
<ellipse cx="374" cy="58.5" rx="12.5" ry="1.2" fill="#000" opacity="0.15"/>
<path d="M375 46L381.5 52" stroke="#707070" stroke-width="3.6" stroke-linecap="round"/>
<path d="M375 46L381.5 52" stroke="#d8d8d8" stroke-width="1.6" stroke-linecap="round"/>
<circle cx="369.3" cy="40.5" r="6.6" fill="#fafafa" stroke="#d0d0d0" stroke-width="0.8"/>
<circle cx="369.3" cy="40.5" r="5.2" fill="#c4d8ee" stroke="#4a86d0" stroke-width="1.1"/>
<ellipse cx="369" cy="39" rx="3.5" ry="2.5" fill="#e6eef8"/>
<!-- undo -->
<path d="M414.9 37.2L418.7 41.8C422 38 427 33.8 432 33.8C438 33.8 442.6 38.5 442.6 44.4C442.6 51 437.5 56.5 431.5 57L427 57.3C431 55.5 438 51.5 438 46C438 42.5 435 40.2 431.2 40.2C428 40.2 425 43 422.9 46.3L427.8 51.6L414.9 51.6Z" fill="url(#gGreen)" stroke="#137a30" stroke-width="0.9" stroke-linejoin="round"/>
<!-- redo -->
<g transform="translate(904 0) scale(-1 1)"><path d="M414.9 37.2L418.7 41.8C422 38 427 33.8 432 33.8C438 33.8 442.6 38.5 442.6 44.4C442.6 51 437.5 56.5 431.5 57L427 57.3C431 55.5 438 51.5 438 46C438 42.5 435 40.2 431.2 40.2C428 40.2 425 43 422.9 46.3L427.8 51.6L414.9 51.6Z" fill="#a6d8a8" stroke="#86c496" stroke-width="0.9" stroke-linejoin="round"/></g>
<!-- eraser -->
<ellipse cx="531" cy="57.5" rx="12" ry="1.8" fill="#000" opacity="0.1"/>
<g transform="rotate(-45 531 45)">
 <rect x="519" y="40.5" width="25" height="9.5" rx="1.5" fill="#e89a9a" stroke="#c87878" stroke-width="0.7"/>
 <rect x="519" y="40.5" width="7" height="9.5" fill="#f0f0f0" stroke="#b0b0b0" stroke-width="0.7"/>
 <rect x="526" y="43.5" width="17" height="3" fill="#f6f6f6"/>
</g>
<!-- scissors -->
<path d="M587 47L590 33.5L591.5 33.5L589.5 47ZM588 46.5L600.5 38.5L601 40L589.5 48Z" fill="#f2f2f2" stroke="#a0a0a0" stroke-width="0.8"/>
<ellipse cx="581" cy="46.5" rx="4.8" ry="3" fill="none" stroke="#e08888" stroke-width="2" transform="rotate(-20 581 46.5)"/>
<ellipse cx="589" cy="56" rx="2.5" ry="4.2" fill="none" stroke="#e08888" stroke-width="2"/>
<path d="M585 47L588.5 48.5L589 51.5" fill="none" stroke="#e08888" stroke-width="2"/>
<path d="M573.5 57.5H579.5M576.5 54.5V60.5" stroke="#333" stroke-width="1"/>
<!-- copy -->
<rect x="618.5" y="30.8" width="21" height="24" rx="1.2" fill="#f4f4f4" stroke="#d4d4d4" stroke-width="0.8"/>
<path d="M622 37.5H632M622 40H632M622 42.5H632M622 45H632" stroke="#d8d8d8" stroke-width="0.8"/>
<path d="M626.7 37.5C626.7 36.8 627.2 36.3 628 36.3H646.5C647.2 36.3 647.6 36.8 647.6 37.5V55.2L641.2 61.3H628C627.2 61.3 626.7 60.8 626.7 60Z" fill="#f2f2f2" stroke="#b8b8b8" stroke-width="0.8"/>
<path d="M647.6 55.2H641.2V61.3Z" fill="#c8c8c8"/>
<path d="M631 43.3H645M631 46H644M631 48.6H643M631 51.3H645" stroke="#c8c8c8" stroke-width="0.9"/>
<path d="M619.5 56.5H625.5M622.5 53.5V59.5" stroke="#333" stroke-width="1"/>
<!-- paste -->
<rect x="665.8" y="33" width="26" height="27.5" rx="1.2" fill="#c8862a" stroke="#9a6418" stroke-width="0.8"/>
<path d="M669 34.5H689.2V55.5L686 58.6H669Z" fill="#f8f8f8"/>
<path d="M689.2 55.5H686V58.6Z" fill="#9a9a9a"/>
<path d="M672.5 40.5H686M672.5 43.3H685.5M672.5 46H684.5M672.5 48.8H686M672.5 51.5H681" stroke="#c4c4c4" stroke-width="0.9"/>
<path d="M674.5 30.5H683.5V33H685.5V37.3H672.5V33H674.5Z" fill="#a8a8a0" stroke="#6a6a6a" stroke-width="0.7" stroke-linejoin="round"/>
<!-- pencil red -->
<path d="M726 52L739 37.5L742.8 40.8L729.7 55.2Z" fill="#e2322a" stroke="#7a1a10" stroke-width="0.8"/>
<path d="M739 37.5L740.5 35.8L744 38.8L742.8 40.8Z" fill="#d8d8d8" stroke="#7a1a10" stroke-width="0.6"/>
<path d="M726 52L724.2 56L729.7 55.2Z" fill="#f2c890" stroke="#7a5a30" stroke-width="0.5"/>
<path d="M723 56.5H745" stroke="#f00" stroke-width="1"/>
<!-- blue box -->
<rect x="766" y="35.5" width="28" height="21" fill="#000080" stroke="#222" stroke-width="0.8"/>
<path d="M769.5 53.5L791 40V53.5Z" fill="none" stroke="#fff" stroke-width="1.2" stroke-dasharray="2.5 1.2"/>
<!-- circle slash -->
<circle cx="826.5" cy="45.7" r="13" fill="none" stroke="#000" stroke-width="1.6"/>
<path d="M812 59.5L840 32" stroke="#1010f0" stroke-width="1"/>
<!-- grid dots -->
<g fill="#111">
 <rect x="870" y="33" width="2" height="2"/><rect x="878" y="33" width="2" height="2"/><rect x="886" y="33" width="2" height="2"/><rect x="894" y="33" width="2" height="2"/>
 <rect x="870" y="41" width="2" height="2"/><rect x="878" y="41" width="2" height="2"/><rect x="886" y="41" width="2" height="2"/><rect x="894" y="41" width="2" height="2"/>
 <rect x="870" y="49" width="2" height="2"/><rect x="878" y="49" width="2" height="2"/><rect x="886" y="49" width="2" height="2"/><rect x="894" y="49" width="2" height="2"/>
 <rect x="870" y="57" width="2" height="2"/><rect x="878" y="57" width="2" height="2"/><rect x="886" y="57" width="2" height="2"/><rect x="894" y="57" width="2" height="2"/>
</g>
<!-- magnifiers -->
<g id="mag1">
 <path d="M945.5 51L952 57.5" stroke="#5a5a5a" stroke-width="3.6" stroke-linecap="round"/>
 <circle cx="935.9" cy="41.7" r="10.6" fill="url(#gLens)" stroke="#e2e2da" stroke-width="2.4"/><circle cx="935.9" cy="41.7" r="12.0" fill="none" stroke="#aeaea6" stroke-width="0.6"/>
 <path d="M930 41.7H942M935.9 35.8V47.6" stroke="#fff" stroke-width="3"/>
</g>
<g>
 <path d="M991.9 51L998.4 57.5" stroke="#5a5a5a" stroke-width="3.6" stroke-linecap="round"/>
 <circle cx="982.3" cy="41.7" r="10.6" fill="url(#gLens)" stroke="#e2e2da" stroke-width="2.4"/><circle cx="982.3" cy="41.7" r="12.0" fill="none" stroke="#aeaea6" stroke-width="0.6"/>
 <path d="M976 41.7H988.6" stroke="#fff" stroke-width="3"/>
</g>
<g>
 <path d="M1037.6 51L1044.1 57.5" stroke="#5a5a5a" stroke-width="3.6" stroke-linecap="round"/>
 <circle cx="1028" cy="41.7" r="10.6" fill="url(#gLens)" stroke="#e2e2da" stroke-width="2.4"/><circle cx="1028" cy="41.7" r="12.0" fill="none" stroke="#aeaea6" stroke-width="0.6"/>
 <path d="M1023 39V36.5H1025.5M1030.5 36.5H1033V39M1033 44.4V46.9H1030.5M1025.5 46.9H1023V44.4" fill="none" stroke="#fff" stroke-width="1.8"/>
</g>
<g>
 <path d="M1083.6 51L1090.1 57.5" stroke="#9a9a9a" stroke-width="3.6" stroke-linecap="round"/>
 <circle cx="1074" cy="41.7" r="10.6" fill="url(#gLensP)" stroke="#dcdcd4" stroke-width="2"/>
 <path d="M1069 39V36.5H1071.5M1076.5 36.5H1079V39M1079 44.4V46.9H1076.5M1071.5 46.9H1069V44.4" fill="none" stroke="#e85a5a" stroke-width="1.8"/>
</g>
<g>
 <path d="M1129.6 51.2L1136.1 57.7" stroke="#5a5a5a" stroke-width="3.6" stroke-linecap="round"/>
 <circle cx="1120" cy="41.9" r="10.6" fill="url(#gLens)" stroke="#e2e2da" stroke-width="2.4"/><circle cx="1120" cy="41.9" r="12.0" fill="none" stroke="#aeaea6" stroke-width="0.6"/>
 <path d="M1113.5 41.9L1118.5 36.5V39.5H1126.5V44.3H1118.5V47.3Z" fill="#fff"/>
</g>
<g>
 <rect x="1154.5" y="30.5" width="27" height="17.5" rx="1" fill="#fff" stroke="#6a8ec8" stroke-width="1"/>
 <path d="M1174.5 51L1180.5 57" stroke="#5a5a5a" stroke-width="3.6" stroke-linecap="round"/>
 <circle cx="1168.2" cy="44.7" r="8.8" fill="url(#gLens)" stroke="#e2e2da" stroke-width="2.4"/><circle cx="1168.2" cy="44.7" r="10.2" fill="none" stroke="#aeaea6" stroke-width="0.6"/>
</g>
<g>
 <path d="M1222.6 52L1229.1 58.5" stroke="#5a5a5a" stroke-width="3.6" stroke-linecap="round"/>
 <circle cx="1213" cy="42.8" r="10.6" fill="url(#gLens)" stroke="#e2e2da" stroke-width="2.4"/><circle cx="1213" cy="42.8" r="12.0" fill="none" stroke="#aeaea6" stroke-width="0.6"/>
 <path d="M1213 30L1216.2 34.2H1214.3V40.9H1220.9V39L1225.4 42.8L1220.9 46.6V44.7H1214.3V51.4H1216.2L1213 55.6L1209.8 51.4H1211.7V44.7H1205.1V46.6L1200.6 42.8L1205.1 39V40.9H1211.7V34.2H1209.8Z" fill="#fff" stroke="#4a7ac8" stroke-width="0.8"/>
</g>
<!-- MDI title icon -->
<circle cx="102" cy="118.8" r="5.6" fill="#f4f4f4" stroke="#2a3f8a" stroke-width="1.8"/>
<path d="M103 118L107 123" stroke="#f0b020" stroke-width="1.8"/>
<rect x="1" y="122" width="35" height="35" fill="url(#gBtn)" stroke="#8e8e8e" stroke-width="2"/><path d="M2.5 156V123.5H35" fill="none" stroke="#fff" stroke-width="1" opacity="0.9"/><rect x="36" y="122" width="35" height="35" fill="url(#gBtn)" stroke="#8e8e8e" stroke-width="2"/><path d="M37.5 156V123.5H70" fill="none" stroke="#fff" stroke-width="1" opacity="0.9"/><rect x="1" y="157" width="35" height="35" fill="url(#gBtn)" stroke="#8e8e8e" stroke-width="2"/><path d="M2.5 191V158.5H35" fill="none" stroke="#fff" stroke-width="1" opacity="0.9"/><rect x="36" y="157" width="35" height="35" fill="url(#gBtn)" stroke="#8e8e8e" stroke-width="2"/><path d="M37.5 191V158.5H70" fill="none" stroke="#fff" stroke-width="1" opacity="0.9"/><rect x="1" y="192" width="35" height="35" fill="url(#gBtn)" stroke="#8e8e8e" stroke-width="2"/><path d="M2.5 226V193.5H35" fill="none" stroke="#fff" stroke-width="1" opacity="0.9"/><rect x="36" y="192" width="35" height="35" fill="url(#gBtn)" stroke="#8e8e8e" stroke-width="2"/><path d="M37.5 226V193.5H70" fill="none" stroke="#fff" stroke-width="1" opacity="0.9"/><rect x="1" y="227" width="35" height="35" fill="url(#gBtn)" stroke="#8e8e8e" stroke-width="2"/><path d="M2.5 261V228.5H35" fill="none" stroke="#fff" stroke-width="1" opacity="0.9"/><rect x="36" y="227" width="35" height="35" fill="url(#gBtn)" stroke="#8e8e8e" stroke-width="2"/><path d="M37.5 261V228.5H70" fill="none" stroke="#fff" stroke-width="1" opacity="0.9"/><rect x="1" y="262" width="35" height="35" fill="url(#gBtn)" stroke="#8e8e8e" stroke-width="2"/><path d="M2.5 296V263.5H35" fill="none" stroke="#fff" stroke-width="1" opacity="0.9"/><rect x="1" y="305" width="35" height="35" fill="url(#gBtn)" stroke="#8e8e8e" stroke-width="2"/><path d="M2.5 339V306.5H35" fill="none" stroke="#fff" stroke-width="1" opacity="0.9"/><rect x="1" y="340" width="35" height="35" fill="url(#gBtn)" stroke="#8e8e8e" stroke-width="2"/><path d="M2.5 374V341.5H35" fill="none" stroke="#fff" stroke-width="1" opacity="0.9"/><rect x="36" y="305" width="35" height="35" fill="url(#gBtn)" stroke="#8e8e8e" stroke-width="2"/><path d="M37.5 339V306.5H70" fill="none" stroke="#fff" stroke-width="1" opacity="0.9"/><rect x="1" y="384" width="35" height="35" fill="url(#gBtn)" stroke="#8e8e8e" stroke-width="2"/><path d="M2.5 418V385.5H35" fill="none" stroke="#fff" stroke-width="1" opacity="0.9"/><rect x="36" y="384" width="35" height="35" fill="url(#gBtn)" stroke="#8e8e8e" stroke-width="2"/><path d="M37.5 418V385.5H70" fill="none" stroke="#fff" stroke-width="1" opacity="0.9"/><rect x="1" y="418" width="35" height="35" fill="url(#gBtn)" stroke="#8e8e8e" stroke-width="2"/><path d="M2.5 452V419.5H35" fill="none" stroke="#fff" stroke-width="1" opacity="0.9"/><rect x="36" y="418" width="35" height="35" fill="url(#gBtn)" stroke="#8e8e8e" stroke-width="2"/><path d="M37.5 452V419.5H70" fill="none" stroke="#fff" stroke-width="1" opacity="0.9"/><rect x="1" y="462" width="35" height="35" fill="url(#gBtn)" stroke="#8e8e8e" stroke-width="2"/><path d="M2.5 496V463.5H35" fill="none" stroke="#fff" stroke-width="1" opacity="0.9"/><path d="M26 152H31V147Z" fill="#000"/><path d="M61 152H66V147Z" fill="#000"/><path d="M26 187H31V182Z" fill="#000"/><path d="M61 187H66V182Z" fill="#000"/><path d="M26 222H31V217Z" fill="#000"/><path d="M61 222H66V217Z" fill="#000"/><path d="M26 257H31V252Z" fill="#000"/><path d="M61 257H66V252Z" fill="#000"/><path d="M26 292H31V287Z" fill="#000"/><path d="M61 335H66V330Z" fill="#000"/><path d="M26 414H31V409Z" fill="#000"/><path d="M61 448H66V443Z" fill="#000"/><path d="M26 492H31V487Z" fill="#000"/><g fill="none" stroke="#111" stroke-width="1.2">
 <!-- points -->
 <path d="M7.5 131.5H15.5M11.5 127.5V135.5M21.5 139.5H29.5M25.5 135.5V143.5M7.5 146.5H15.5M11.5 142.5V150.5"/>
 <!-- line -->
 <path d="M41.5 140.5L64.5 129"/>
 <!-- arc -->
 <path d="M7 183.5C8 171 15.5 163 27.5 161.5" stroke-width="1.4" stroke="#333"/>
 <!-- circle -->
 <circle cx="52.5" cy="172.5" r="9.8" stroke="#333"/>
 <!-- ellipse -->
 <ellipse cx="18" cy="209" rx="5.5" ry="12.5" transform="rotate(40 18 209)" stroke="#333"/>
 <!-- spline -->
 <path d="M43 199.8C48.5 198.5 58 210 62 211.3C65.5 212.3 63.5 198.8 60 199.2C56 199.6 52.5 218.2 48.4 218.2C44.5 218.2 40 201 43 199.8Z" stroke="#222"/>
 <!-- polyline hook -->
 <path d="M13.5 238.8C9 239.5 8 247 13 248.5H27.5" stroke="#555" stroke-width="1.3"/>
 <!-- shapes -->
 <path d="M42.5 237.5L45.5 232L51.5 232L54.5 237.5L51.5 243.5L45.5 243.5Z M56 245.3L61.2 236.5L66.5 245.3Z" stroke="#333" stroke-width="1.1"/>
 <rect x="41.5" y="248.5" width="14.5" height="7.5" stroke="#333" stroke-width="1.1"/>
 <!-- hatch -->
 <path d="M7.5 278.5L13.5 272.5H28.5V286.5H7.5Z" stroke="#222" stroke-width="1.2"/>
 <path d="M9 284L20 273M12.5 286L25.5 273M17 286L28 275M22 286L28 280M8 280L15 273" stroke="#555" stroke-width="0.7"/>
 <circle cx="20.5" cy="279.5" r="2.8" fill="#eee" stroke="#222" stroke-width="1.1"/>
 <!-- A -->
 <text x="18" y="332" text-anchor="middle" font-family="Liberation Serif" font-size="27.5" fill="#111" stroke="none">A</text>
 <!-- dimension -->
 <path d="M43.5 314V330M61.5 314V333M43.5 316.5H61.5" stroke="#222" stroke-width="1.1"/>
 <path d="M43.5 316.5L47 315V318ZM61.5 316.5L58 315V318Z" fill="#222" stroke="#222" stroke-width="0.6"/>
 <!-- image -->
 <rect x="7" y="348.5" width="22" height="16.5" fill="#fff" stroke="#222" stroke-width="1.3"/>
 <path d="M9.5 362.5V358.5L13.5 355L17.5 357.5L21 353.5L26.5 358.5V362.5Z" fill="#000" stroke="none"/>
 <circle cx="24.5" cy="352" r="1.6" fill="#000" stroke="none"/>
 <!-- measure tool -->
 <path d="M5.5 390.5V410.5H25Z" stroke="#111" stroke-width="1.3"/>
 <path d="M9 402V407.5H14.5Z" stroke="#111" stroke-width="1.1"/>
 <path d="M11.5 387.5L17 393" stroke="#d42020" stroke-width="3" stroke-linecap="round"/><path d="M17 393L18.8 394.8" stroke="#6a4020" stroke-width="1.6"/>
 <path d="M26 386V389M26 389L23.5 402M26 389L28.5 402" stroke="#111" stroke-width="1.1"/>
 <!-- ruler -->
 <rect x="41" y="395.5" width="24" height="8" rx="1.5" fill="#fff" stroke="#555" stroke-width="1.1"/>
 <path d="M44 396V398M47 396V398M50 396V398M53 396V399.5M56 396V398M59 396V398M62 396V398" stroke="#555" stroke-width="0.7"/>
 <!-- block -->
 <rect x="7.5" y="425.5" width="18" height="13" fill="#f2ecd2" stroke="#aaa" stroke-width="1"/>
 <circle cx="23" cy="437.5" r="8.2" fill="#f2ecd2" fill-opacity="0.8" stroke="#999" stroke-width="1"/>
 <circle cx="7.5" cy="438.5" r="1.5" fill="#f08080" stroke="none"/>
 <!-- modify -->
 <path d="M41.5 433.5L59.5 423.5" stroke="#f03030" stroke-width="1.3"/>
 <path d="M51 429L51 442L54 439.5L56.5 445L58.5 444L56 438.5L59.5 438.5Z" fill="#fff" stroke="#555" stroke-width="0.9"/>
 <!-- cube -->
 <path d="M7.5 474L19.5 468L28.5 473L16.5 479ZM7.5 474V484.5L16.5 489.5V479M28.5 473V483.5L16.5 489.5" stroke="#222" stroke-width="1.2" stroke-linejoin="round"/>
</g>
<circle cx="1164" cy="118.5" r="7" fill="#6e6e6e"/><path d="M1161 115.5L1167 121.5M1167 115.5L1161 121.5" stroke="#fff" stroke-width="1.8"/><circle cx="1182" cy="118.5" r="7" fill="#6e6e6e"/><rect x="1180.5" y="114.5" width="5.5" height="4.5" fill="none" stroke="#fff" stroke-width="1.1"/><rect x="1177.8" y="117.0" width="5.5" height="4.5" fill="#6e6e6e" stroke="#fff" stroke-width="1.1"/><rect x="1156" y="131" width="37" height="24" fill="url(#gBtn)" stroke="#a9a9a9" stroke-width="2"/><rect x="1194" y="131" width="36" height="24" fill="url(#gBtn)" stroke="#a9a9a9" stroke-width="2"/><rect x="1231" y="131" width="37" height="24" fill="url(#gBtn)" stroke="#a9a9a9" stroke-width="2"/><rect x="1269" y="131" width="36" height="24" fill="url(#gBtn)" stroke="#a9a9a9" stroke-width="2"/><rect x="1306" y="131" width="37" height="24" fill="url(#gBtn)" stroke="#a9a9a9" stroke-width="2"/><rect x="1344" y="131" width="36" height="24" fill="url(#gBtn)" stroke="#a9a9a9" stroke-width="2"/><rect x="1381" y="131" width="37" height="24" fill="url(#gBtn)" stroke="#a9a9a9" stroke-width="2"/><rect x="1419" y="131" width="36" height="24" fill="url(#gBtn)" stroke="#a9a9a9" stroke-width="2"/><g transform="translate(1174.0 143.5) scale(1.0)"><path d="M-8 0C-6 -7 6 -7 8 0C6 7 -6 7 -8 0Z" fill="#000"/><circle cx="0" cy="0.2" r="4" fill="#fff"/><circle cx="0" cy="-1" r="3" fill="#000"/></g><g transform="translate(1211.5 143.5) scale(1.0)"><path d="M-8 0C-6 -7 6 -7 8 0C6 7 -6 7 -8 0Z" fill="#a8a8a8"/><circle cx="0" cy="0.2" r="4" fill="#fff"/><circle cx="0" cy="-1" r="3" fill="#a8a8a8"/></g><path d="M1243.0 143.5H1255.0M1249.0 137.5V149.5" stroke="#e00000" stroke-width="3"/><path d="M1280.5 143.5H1292.5" stroke="#e00000" stroke-width="3"/><text x="1324.0" y="147.5" text-anchor="middle" font-family="Liberation Sans" font-size="12" fill="#111">a<tspan dx="-0.5">|</tspan>b</text><path d="M1357.25 148.33L1367.73 138.94L1365.99 137.00L1355.51 146.40Z" fill="#e8a838" stroke="#8a5a18" stroke-width="0.6"/><path d="M1354.00 149.50L1357.25 148.33L1355.51 146.40Z" fill="#f4d8a8" stroke="#8a5a18" stroke-width="0.5"/><path d="M1354.00 149.50L1355.37 149.08L1354.57 148.19Z" fill="#333"/><path d="M1367.73 138.94L1369.37 137.47L1367.63 135.53L1365.99 137.00Z" fill="#e83030" stroke="#8a1a10" stroke-width="0.5"/><rect x="1393.5" y="136.5" width="11.5" height="13" fill="#eaeaea" stroke="#d4d4d4" stroke-width="0.8"/><path d="M1396 138.5H1400.5V146H1403L1399 150L1395 146H1397.5V140.5H1396Z" fill="#8ab0f0"/><rect x="1431" y="138" width="10" height="10" fill="#e05a3a" stroke="#c84020" stroke-width="0.8"/><path d="M1433.5 140.5L1438.5 145.5M1438.5 140.5L1433.5 145.5" stroke="#fff" stroke-width="1.6"/><g transform="translate(1168.6 166.5) scale(1.0)"><path d="M-8 0C-6 -7 6 -7 8 0C6 7 -6 7 -8 0Z" fill="#000"/><circle cx="0" cy="0.2" r="4" fill="#fff"/><circle cx="0" cy="-1" r="3" fill="#000"/></g><path d="M1188.56 171.91L1196.56 162.52L1194.58 160.83L1186.59 170.22Z" fill="#e8a838" stroke="#8a5a18" stroke-width="0.6"/><path d="M1185.50 173.50L1188.56 171.91L1186.59 170.22Z" fill="#f4d8a8" stroke="#8a5a18" stroke-width="0.5"/><path d="M1185.50 173.50L1186.80 172.90L1185.89 172.12Z" fill="#333"/><path d="M1196.56 162.52L1197.99 160.84L1196.01 159.16L1194.58 160.83Z" fill="#e83030" stroke="#8a1a10" stroke-width="0.5"/><g transform="translate(1168.6 186.5) scale(1.0)"><path d="M-8 0C-6 -7 6 -7 8 0C6 7 -6 7 -8 0Z" fill="#3c4a5c"/><circle cx="0" cy="0.2" r="4" fill="#fff"/><circle cx="0" cy="-1" r="3" fill="#3c4a5c"/></g><g transform="translate(1168.6 206.5) scale(1.0)"><path d="M-8 0C-6 -7 6 -7 8 0C6 7 -6 7 -8 0Z" fill="#000"/><circle cx="0" cy="0.2" r="4" fill="#fff"/><circle cx="0" cy="-1" r="3" fill="#000"/></g><circle cx="1164" cy="338.5" r="7" fill="#6e6e6e"/><path d="M1161 335.5L1167 341.5M1167 335.5L1161 341.5" stroke="#fff" stroke-width="1.8"/><circle cx="1182" cy="338.5" r="7" fill="#6e6e6e"/><rect x="1180.5" y="334.5" width="5.5" height="4.5" fill="none" stroke="#fff" stroke-width="1.1"/><rect x="1177.8" y="337.0" width="5.5" height="4.5" fill="#6e6e6e" stroke="#fff" stroke-width="1.1"/><rect x="1156" y="351" width="58" height="24" fill="url(#gBtn)" stroke="#a9a9a9" stroke-width="2"/><rect x="1215" y="351" width="59" height="24" fill="url(#gBtn)" stroke="#a9a9a9" stroke-width="2"/><rect x="1275" y="351" width="59" height="24" fill="url(#gBtn)" stroke="#a9a9a9" stroke-width="2"/><rect x="1335" y="351" width="59" height="24" fill="url(#gBtn)" stroke="#a9a9a9" stroke-width="2"/><rect x="1395" y="351" width="60" height="24" fill="url(#gBtn)" stroke="#a9a9a9" stroke-width="2"/><g transform="translate(1184.5 363) scale(1.0)"><path d="M-8 0C-6 -7 6 -7 8 0C6 7 -6 7 -8 0Z" fill="#000"/><circle cx="0" cy="0.2" r="4" fill="#fff"/><circle cx="0" cy="-1" r="3" fill="#000"/></g><g transform="translate(1244.0 363) scale(1.0)"><path d="M-8 0C-6 -7 6 -7 8 0C6 7 -6 7 -8 0Z" fill="#a8a8a8"/><circle cx="0" cy="0.2" r="4" fill="#fff"/><circle cx="0" cy="-1" r="3" fill="#a8a8a8"/></g><path d="M1298.0 363H1310.0M1304.0 357V369" stroke="#e00000" stroke-width="3"/><path d="M1358.0 363H1370.0" stroke="#e00000" stroke-width="3"/><path d="M1421.21 368.71L1431.32 358.96L1429.51 357.09L1419.40 366.84Z" fill="#e8a838" stroke="#8a5a18" stroke-width="0.6"/><path d="M1418.00 370.00L1421.21 368.71L1419.40 366.84Z" fill="#f4d8a8" stroke="#8a5a18" stroke-width="0.5"/><path d="M1418.00 370.00L1419.35 369.53L1418.52 368.67Z" fill="#333"/><path d="M1431.32 358.96L1432.90 357.44L1431.10 355.56L1429.51 357.09Z" fill="#e83030" stroke="#8a1a10" stroke-width="0.5"/><g transform="translate(1422.9 386.6) scale(1.0)"><path d="M-8 0C-6 -7 6 -7 8 0C6 7 -6 7 -8 0Z" fill="#000"/><circle cx="0" cy="0.2" r="4" fill="#fff"/><circle cx="0" cy="-1" r="3" fill="#000"/></g><path d="M1441.7 385.6V383.40000000000003A3.3 3.5 0 0 1 1448.3 383.40000000000003V385.6" fill="none" stroke="#b4b4b4" stroke-width="1.6"/><rect x="1440.2" y="386.20000000000005" width="9.6" height="7" fill="#b4b4b4"/><g transform="translate(1422.9 406.6) scale(1.0)"><path d="M-8 0C-6 -7 6 -7 8 0C6 7 -6 7 -8 0Z" fill="#000"/><circle cx="0" cy="0.2" r="4" fill="#fff"/><circle cx="0" cy="-1" r="3" fill="#000"/></g><path d="M1441.7 405.6V403.40000000000003A3.3 3.5 0 0 1 1448.3 403.40000000000003V405.6" fill="none" stroke="#b4b4b4" stroke-width="1.6"/><rect x="1440.2" y="406.20000000000005" width="9.6" height="7" fill="#b4b4b4"/><g transform="translate(1422.9 426.6) scale(1.0)"><path d="M-8 0C-6 -7 6 -7 8 0C6 7 -6 7 -8 0Z" fill="#000"/><circle cx="0" cy="0.2" r="4" fill="#fff"/><circle cx="0" cy="-1" r="3" fill="#000"/></g><path d="M1441.7 425.6V423.40000000000003A3.3 3.5 0 0 1 1448.3 423.40000000000003V425.6" fill="none" stroke="#b4b4b4" stroke-width="1.6"/><rect x="1440.2" y="426.20000000000005" width="9.6" height="7" fill="#b4b4b4"/><g transform="translate(1422.9 446.6) scale(1.0)"><path d="M-8 0C-6 -7 6 -7 8 0C6 7 -6 7 -8 0Z" fill="#000"/><circle cx="0" cy="0.2" r="4" fill="#fff"/><circle cx="0" cy="-1" r="3" fill="#000"/></g><path d="M1441.7 445.6V443.40000000000003A3.3 3.5 0 0 1 1448.3 443.40000000000003V445.6" fill="none" stroke="#b4b4b4" stroke-width="1.6"/><rect x="1440.2" y="446.20000000000005" width="9.6" height="7" fill="#b4b4b4"/><g transform="translate(1422.9 466.6) scale(1.0)"><path d="M-8 0C-6 -7 6 -7 8 0C6 7 -6 7 -8 0Z" fill="#000"/><circle cx="0" cy="0.2" r="4" fill="#fff"/><circle cx="0" cy="-1" r="3" fill="#000"/></g><path d="M1441.7 465.6V463.40000000000003A3.3 3.5 0 0 1 1448.3 463.40000000000003V465.6" fill="none" stroke="#b4b4b4" stroke-width="1.6"/><rect x="1440.2" y="466.20000000000005" width="9.6" height="7" fill="#b4b4b4"/><g transform="translate(1422.9 486.6) scale(1.0)"><path d="M-8 0C-6 -7 6 -7 8 0C6 7 -6 7 -8 0Z" fill="#000"/><circle cx="0" cy="0.2" r="4" fill="#fff"/><circle cx="0" cy="-1" r="3" fill="#000"/></g><path d="M1441.7 485.6V483.40000000000003A3.3 3.5 0 0 1 1448.3 483.40000000000003V485.6" fill="none" stroke="#b4b4b4" stroke-width="1.6"/><rect x="1440.2" y="486.20000000000005" width="9.6" height="7" fill="#b4b4b4"/><path d="M1396.71 492.72L1406.32 483.46L1404.51 481.59L1394.90 490.84Z" fill="#e8a838" stroke="#8a5a18" stroke-width="0.6"/><path d="M1393.50 494.00L1396.71 492.72L1394.90 490.84Z" fill="#f4d8a8" stroke="#8a5a18" stroke-width="0.5"/><path d="M1393.50 494.00L1394.85 493.53L1394.02 492.67Z" fill="#333"/><path d="M1406.32 483.46L1407.90 481.94L1406.10 480.06L1404.51 481.59Z" fill="#e83030" stroke="#8a1a10" stroke-width="0.5"/><rect x="1463.5" y="127.5" width="26.5" height="27" fill="#fff" stroke="#222" stroke-width="1"/><rect x="1463" y="127" width="27.5" height="5" fill="#000"/><rect x="1464.5" y="128.2" width="3" height="3" fill="#fff"/><path d="M1470 150L1473 137.5L1476 137L1473 150Z" fill="#777" stroke="#333" stroke-width="0.6"/><path d="M1473 150L1476 137L1483 135L1481 147Z" fill="#fafafa" stroke="#555" stroke-width="0.6"/><path d="M1475 146L1480 140L1479.5 146Z" fill="none" stroke="#e03030" stroke-width="0.8"/><rect x="1463.5" y="175.0" width="26.5" height="27" fill="#fff" stroke="#222" stroke-width="1"/><rect x="1463" y="174.5" width="27.5" height="5" fill="#000"/><rect x="1464.5" y="175.7" width="3" height="3" fill="#fff"/><rect x="1469.5" y="183.5" width="10" height="8" fill="#f2e8c0" stroke="#777" stroke-width="0.7"/><circle cx="1478.5" cy="192" r="5" fill="#f2e8c0" fill-opacity="0.85" stroke="#777" stroke-width="0.7"/><rect x="1463.5" y="221.5" width="26.5" height="27" fill="#fff" stroke="#222" stroke-width="1"/><rect x="1463" y="221" width="27.5" height="5" fill="#000"/><rect x="1464.5" y="222.2" width="3" height="3" fill="#fff"/><rect x="1468.5" y="232.5" width="16.5" height="11" rx="2" fill="#f4f4f4" stroke="#bcd0ea" stroke-width="0.8"/><rect x="1463.5" y="277.5" width="26.5" height="27" fill="#fff" stroke="#222" stroke-width="1"/><rect x="1463" y="277" width="27.5" height="5" fill="#000"/><rect x="1464.5" y="278.2" width="3" height="3" fill="#fff"/><rect x="1466" y="286" width="3.2" height="3.2" fill="#000"/><rect x="1471.5" y="286.3" width="15.5" height="2.8" fill="#fff" stroke="#444" stroke-width="0.6"/><rect x="1466" y="291" width="3.2" height="3.2" fill="#000"/><rect x="1471.5" y="291.3" width="15.5" height="2.8" fill="#fff" stroke="#444" stroke-width="0.6"/><rect x="1466" y="296" width="3.2" height="3.2" fill="#000"/><rect x="1471.5" y="296.3" width="15.5" height="2.8" fill="#fff" stroke="#444" stroke-width="0.6"/><rect x="1463.5" y="323.5" width="26.5" height="27" fill="#fff" stroke="#222" stroke-width="1"/><rect x="1463" y="323" width="27.5" height="5" fill="#000"/><rect x="1464.5" y="324.2" width="3" height="3" fill="#fff"/><path d="M1469 332H1484L1478 339V347L1475 344V339Z" fill="#ddd" stroke="#333" stroke-width="0.8"/><rect x="1463.5" y="369.5" width="26.5" height="27" fill="#fff" stroke="#222" stroke-width="1"/><rect x="1463" y="369" width="27.5" height="5" fill="#000"/><rect x="1464.5" y="370.2" width="3" height="3" fill="#fff"/><path d="M1468 377V392L1475 387V381Z" fill="#fff" stroke="#333" stroke-width="0.8"/><rect x="1475" y="380" width="9" height="8" fill="#aaa" stroke="#333" stroke-width="0.6"/><path d="M1471 384H1486" stroke="#f08080" stroke-width="0.8"/><rect x="1463.5" y="425.5" width="26.5" height="27" fill="#fff" stroke="#222" stroke-width="1"/><rect x="1463" y="425" width="27.5" height="5" fill="#000"/><rect x="1464.5" y="426.2" width="3" height="3" fill="#fff"/><path d="M1466 434.0H1477" stroke="#999" stroke-width="0.6"/><path d="M1466 437.2H1477" stroke="#999" stroke-width="0.6"/><path d="M1466 440.4H1477" stroke="#999" stroke-width="0.6"/><path d="M1466 443.6H1477" stroke="#999" stroke-width="0.6"/><path d="M1465 448H1488" stroke="#555" stroke-width="0.6"/><path d="M1472 450.5H1487" stroke="#777" stroke-width="0.6"/><rect x="1463.5" y="472.0" width="26.5" height="27" fill="#fff" stroke="#222" stroke-width="1"/><rect x="1463" y="471.5" width="27.5" height="5" fill="#000"/><rect x="1464.5" y="472.7" width="3" height="3" fill="#fff"/><rect x="1470.5" y="480" width="12" height="14.5" fill="#f4f4f4" stroke="#c08030" stroke-width="1.5"/><rect x="1473.5" y="478.5" width="6" height="3" fill="#999"/><rect x="1133.5" y="780.5" width="13.5" height="9.5" fill="#fff" stroke="#333" stroke-width="0.8"/><rect x="1133" y="780" width="14.5" height="2.5" fill="#000"/><rect x="1144" y="780.8" width="1" height="1" fill="#fff"/><path d="M719.5 814A6.5 8 0 0 1 732.5 814V827A6.5 8.5 0 0 1 719.5 827Z" fill="#fff" stroke="#333" stroke-width="1"/><path d="M719.5 819H732.5M726 806V819" stroke="#333" stroke-width="0.9"/><rect x="724" y="809" width="4" height="7" rx="2" fill="#fff" stroke="#333" stroke-width="0.9"/><defs><radialGradient id="gRing" cx="0.5" cy="0.5" r="0.5"><stop offset="0.66" stop-color="#fff" stop-opacity="0"/><stop offset="0.80" stop-color="#fff" stop-opacity="0.55"/><stop offset="0.87" stop-color="#d2deea" stop-opacity="0.8"/><stop offset="0.93" stop-color="#a4bad0" stop-opacity="0.9"/><stop offset="1" stop-color="#b4c6d8" stop-opacity="0.55"/></radialGradient></defs><circle cx="1275" cy="185" r="39.5" fill="url(#gRing)"/><circle cx="1275" cy="185" r="36.8" fill="none" stroke="#a0b6cc" stroke-width="1" opacity="0.5"/><path d="M1275.3 185.3V206L1280.3 201.6L1285 211.2L1288.7 209.6L1284.2 200.2L1290.6 199.9Z" fill="#fff" stroke="#111" stroke-width="1.2" stroke-linejoin="round"/></svg>
</body></html>
